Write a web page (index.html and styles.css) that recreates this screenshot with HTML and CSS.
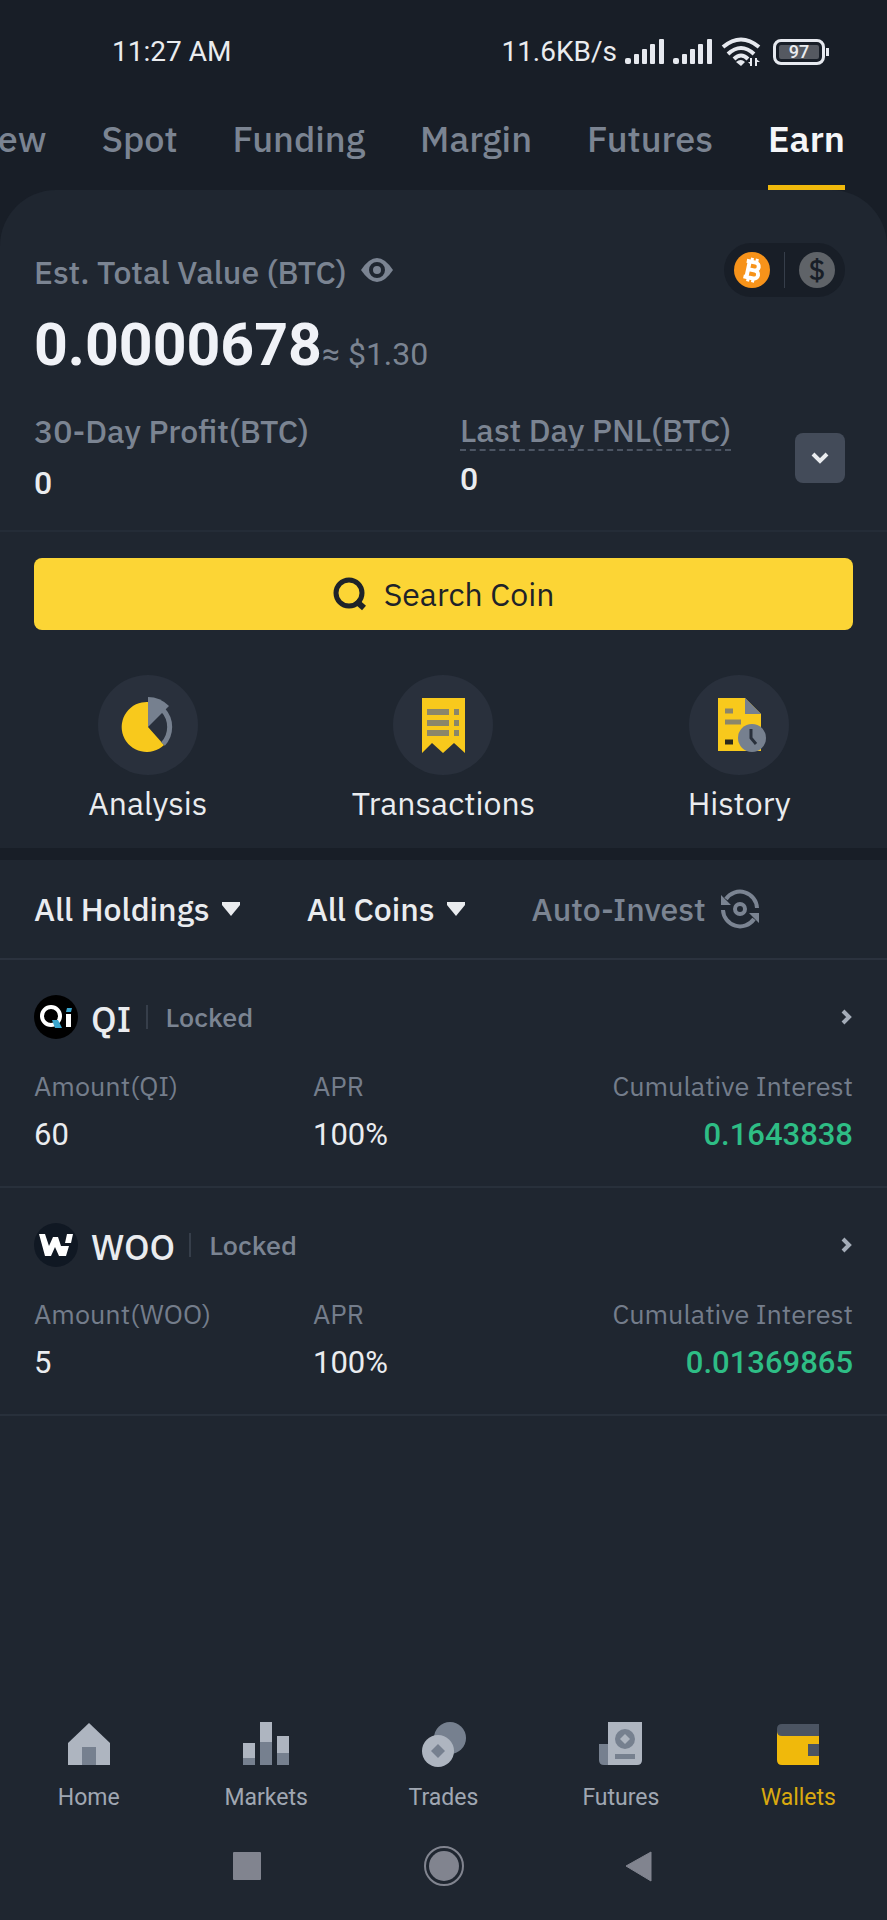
FILE: index.html
```html
<!DOCTYPE html>
<html lang="en">
<head>
  <meta charset="UTF-8">
  <meta name="viewport" content="width=device-width, initial-scale=1">
  <title>Wallets - Earn</title>
  <link rel="stylesheet" href="styles.css">
</head>
<body>
  <header class="status-bar">
    <span class="time">11:27 AM</span>
    <div class="status-right">
      <span>11.6KB/s</span>
      <svg class="signal" width="40" height="26" viewBox="0 0 40 26" fill="#e6e9ef"><rect x="0" y="19" width="6" height="6" rx="2"/><rect x="9" y="15" width="5" height="10" rx="1"/><rect x="17" y="10" width="5" height="15" rx="1"/><rect x="25" y="5" width="5" height="20" rx="1"/><rect x="34" y="0" width="5" height="25" rx="1"/></svg>
      <svg class="signal" width="40" height="26" viewBox="0 0 40 26" fill="#e6e9ef"><rect x="0" y="19" width="6" height="6" rx="2"/><rect x="9" y="15" width="5" height="10" rx="1"/><rect x="17" y="10" width="5" height="15" rx="1"/><rect x="25" y="5" width="5" height="20" rx="1"/><rect x="34" y="0" width="5" height="25" rx="1"/></svg>
      <svg class="wifi" width="40" height="30" viewBox="0 0 40 30" fill="none" stroke="#e6e9ef" stroke-width="4"><path d="M2 10Q20-5 38 10M7 17Q20 5 33 17M13 22Q20 15 27 22"/><path d="M15 25Q20 21 24 25L20 29Z" fill="#e6e9ef" stroke="none"/><path d="M30 21v8M35 21v8" stroke-width="2"/><path d="M27 25h4v4zM34 21l5 4h-5z" fill="#e6e9ef" stroke="none"/></svg>
      <span class="battery">97</span>
    </div>
  </header>

  <nav class="tabs">
    <a href="#" class="tab">Overview</a>
    <a href="#" class="tab">Spot</a>
    <a href="#" class="tab">Funding</a>
    <a href="#" class="tab">Margin</a>
    <a href="#" class="tab">Futures</a>
    <a href="#" class="tab active">Earn</a>
  </nav>

  <main>
    <section class="summary">
      <div class="summary-head">
        <span class="label">Est. Total Value (BTC)</span>
        <svg class="eye" width="32" height="24" viewBox="0 0 32 24"><path d="M0 12Q16-12 32 12Q16 36 0 12Z" fill="#7b8492"/><circle cx="16" cy="12" r="6" fill="none" stroke="#1f2630" stroke-width="4"/></svg>
        <div class="currency">
          <button class="coin btc" aria-label="Show in BTC"><svg width="36" height="36" viewBox="0 0 36 36"><g transform="rotate(12 18 18)" fill="none" stroke="#fff" stroke-width="4"><path d="M11 10h9a4 4 0 0 1 0 8h-6h7a4 4 0 0 1 0 8H11M14 10v16"/><path d="M16 6v5M21 6v5M16 25v5M21 25v5" stroke-width="3"/></g></svg></button>
          <span class="currency-line"></span>
          <button class="coin usd" aria-label="Show in USD">$</button>
        </div>
      </div>
      <div class="balance"><strong>0.0000678</strong><span>≈ $1.30</span></div>
      <div class="stats">
        <div class="stat">
          <span class="label">30-Day Profit(BTC)</span>
          <b>0</b>
        </div>
        <div class="stat">
          <span class="label dashed">Last Day PNL(BTC)</span>
          <b>0</b>
        </div>
        <button class="expand" aria-label="Expand"><svg width="18" height="12" viewBox="0 0 18 12" fill="none" stroke="#eaecef" stroke-width="4"><path d="M2 2l7 7 7-7"/></svg></button>
      </div>
    </section>

    <section class="tools">
      <button class="search"><svg width="34" height="34" viewBox="0 0 34 34" fill="none" stroke="#1e2329"><circle cx="16" cy="16" r="13" stroke-width="5"/><path d="M23 24l8 7" stroke-width="6"/></svg>Search Coin</button>
      <div class="actions">
        <a href="#" class="action">
          <span class="action-icon"><svg width="54" height="58" viewBox="0 0 54 58"><path d="M27 6v25l16 18A25 25 0 1 1 27 6Z" fill="#f8c91c"/><path d="M27 1q12 0 21 9l-3 3L27 31Z" fill="#76808f"/><path d="M42 14a25 25 0 0 1 0 34" fill="none" stroke="#76808f" stroke-width="5"/></svg></span>
          Analysis
        </a>
        <a href="#" class="action">
          <span class="action-icon"><svg width="54" height="58" viewBox="0 0 54 58"><path d="M6 2h43v55l-11-10-11 10-11-10L6 57Z" fill="#f8c91c"/><path d="M11 16h22M38 16h5M11 27h22M38 27h5M11 37h22M38 37h5" stroke="#8b866a" stroke-width="6"/></svg></span>
          Transactions
        </a>
        <a href="#" class="action">
          <span class="action-icon"><svg width="54" height="58" viewBox="0 0 54 58"><path d="M6 2h27l16 16v37H6Z" fill="#f8c91c"/><path d="M33 2l16 16H33Z" fill="#76808f"/><path d="M13 15h8M13 26h16" stroke="#8b866a" stroke-width="5"/><path d="M13 46h8" stroke="#2b2a1c" stroke-width="5"/><circle cx="40" cy="42" r="14" fill="#76808f"/><path d="M39 33v9l5 6" fill="none" stroke="#29303c" stroke-width="3"/></svg></span>
          History
        </a>
      </div>
    </section>

    <section class="filters">
      <button class="filter">All Holdings <svg width="18" height="14" viewBox="0 0 18 14"><path d="M0 0h18v3L9 14 0 3Z" fill="#eaecef"/></svg></button>
      <button class="filter">All Coins <svg width="18" height="14" viewBox="0 0 18 14"><path d="M0 0h18v3L9 14 0 3Z" fill="#eaecef"/></svg></button>
      <button class="filter muted">Auto-Invest <svg width="40" height="40" viewBox="0 0 40 40" fill="none" stroke="#7b8492" stroke-width="4"><path d="M6 10A17 17 0 0 1 37 19M34 30A17 17 0 0 1 3 21"/><circle cx="20" cy="20" r="5"/><path d="M1 6v10h10ZM39 34V24H29Z" fill="#7b8492" stroke="none"/></svg></button>
    </section>

    <section class="holding">
      <a href="#" class="holding-head">
        <svg class="logo" width="44" height="44" viewBox="0 0 44 44"><circle cx="22" cy="22" r="22" fill="#000"/><circle cx="17" cy="21" r="9" fill="none" stroke="#fff" stroke-width="4"/><path d="M18 25h6l4 8h-7Z" fill="#3aa5cd"/><path d="M32 19h5v13h-5Z" fill="#fff"/><path d="M33 13h5l-1 4h-5Z" fill="#3aa5cd"/></svg>
        <span class="name">QI</span>
        <span class="type">Locked</span>
        <svg class="arrow" width="12" height="16" viewBox="0 0 12 16" fill="none" stroke="#a4acb8" stroke-width="4"><path d="M2 2l6 6-6 6"/></svg>
      </a>
      <dl class="figures">
        <div><dt>Amount(QI)</dt><dd>60</dd></div>
        <div><dt>APR</dt><dd>100%</dd></div>
        <div><dt>Cumulative Interest</dt><dd class="green">0.1643838</dd></div>
      </dl>
    </section>

    <section class="holding">
      <a href="#" class="holding-head">
        <svg class="logo" width="44" height="44" viewBox="0 0 44 44"><circle cx="22" cy="22" r="22" fill="#101823"/><path d="M5 11h6l4 12 4-9h5l3 9h8l-3 10h-7l-4-9-4 9h-6Z" fill="#fff"/><path d="M33 11h6l-2 9h-6Z" fill="#fff"/></svg>
        <span class="name">WOO</span>
        <span class="type">Locked</span>
        <svg class="arrow" width="12" height="16" viewBox="0 0 12 16" fill="none" stroke="#a4acb8" stroke-width="4"><path d="M2 2l6 6-6 6"/></svg>
      </a>
      <dl class="figures">
        <div><dt>Amount(WOO)</dt><dd>5</dd></div>
        <div><dt>APR</dt><dd>100%</dd></div>
        <div><dt>Cumulative Interest</dt><dd class="green">0.01369865</dd></div>
      </dl>
    </section>
  </main>

  <footer>
    <nav class="bottom-nav">
      <a href="#"><svg width="48" height="48" viewBox="0 0 48 48"><path d="M24 3l21 20v22H3V23Z" fill="#aeb5c0"/><path d="M17 27h14v18H17Z" fill="#76808f"/></svg>Home</a>
      <a href="#"><svg width="48" height="48" viewBox="0 0 48 48"><path d="M1 23h12v16H1ZM18 2h12v21H18ZM35 16h12v18H35Z" fill="#aeb5c0"/><path d="M1 38h12v7H1ZM18 22h12v23H18ZM35 33h12v12H35Z" fill="#76808f"/></svg>Markets</a>
      <a href="#"><svg width="48" height="48" viewBox="0 0 48 48"><circle cx="31" cy="18" r="16" fill="#76808f"/><circle cx="19" cy="31" r="16" fill="#aeb5c0"/><path d="M19 24l7 7-7 7-7-7Z" fill="#76808f"/></svg>Trades</a>
      <a href="#"><svg width="48" height="48" viewBox="0 0 48 48"><path d="M2 24h9v21H7q-5 0-5-5Z" fill="#76808f"/><path d="M11 2h34v38q0 5-5 5H11Z" fill="#aeb5c0"/><circle cx="28" cy="19" r="10" fill="#76808f"/><path d="M28 14l5 5-5 5-5-5Z" fill="#aeb5c0"/><path d="M18 34h20v5H18Z" fill="#76808f"/></svg>Futures</a>
      <a href="#" class="current"><svg width="48" height="48" viewBox="0 0 48 48"><path d="M3 10l6 5h36v30H8q-5 0-5-5Z" fill="#f0b90b"/><path d="M8 4h37v12H8q-5 0-5-5v-2q0-5 5-5ZM34 24h11v12H34Z" fill="#4b5462"/></svg>Wallets</a>
    </nav>
    <div class="system-nav">
      <button aria-label="Recent apps"><svg width="40" height="40" viewBox="0 0 40 40"><rect x="6" y="6" width="28" height="28" rx="1" fill="#81848f"/></svg></button>
      <button aria-label="Home screen"><svg width="40" height="40" viewBox="0 0 40 40"><circle cx="20" cy="20" r="19" fill="none" stroke="#81848f" stroke-width="2"/><circle cx="20" cy="20" r="15" fill="#81848f"/></svg></button>
      <button aria-label="Back"><svg width="40" height="40" viewBox="0 0 40 40"><path d="M30 6v29L5 20Z" fill="#81848f" stroke="#81848f" stroke-linejoin="round"/></svg></button>
    </div>
  </footer>
</body>
</html>
```

FILE: styles.css
```css
* {
  box-sizing: border-box;
}
body {
  margin: 0;
  min-height: 100vh;
  display: flex;
  flex-direction: column;
  background: #181e27;
  color: #eaecef;
  font-family: 'IBM Plex Sans', Roboto, sans-serif;
  font-size: 32px;
  line-height: 40px;
  overflow-x: hidden;
}
a {
  color: inherit;
  text-decoration: none;
}
button {
  border: none;
  padding: 0;
  background: none;
  color: inherit;
  font: inherit;
  cursor: pointer;
}
svg {
  display: block;
  flex-shrink: 0;
}

/* phone status bar */
.status-bar {
  display: flex;
  justify-content: space-between;
  align-items: center;
  height: 104px;
  padding: 0 58px 0 112px;
  font-family: Roboto, sans-serif;
  font-size: 28px;
}
.status-right {
  display: flex;
  align-items: center;
  gap: 8px;
}
.battery {
  position: relative;
  width: 52px;
  height: 26px;
  margin: 0 4px;
  border: 3px solid #e6e9ef;
  border-radius: 8px;
  background: #555961;
  box-shadow: inset 0 0 0 3px #181e27;
  font-size: 18px;
  font-weight: 500;
  line-height: 20px;
  text-align: center;
}
.battery::after {
  content: "";
  position: absolute;
  top: 6px;
  right: -7px;
  width: 3px;
  height: 8px;
  background: #e6e9ef;
}

/* wallet tabs */
.tabs {
  display: flex;
  justify-content: flex-end;
  gap: 55px;
  height: 86px;
  padding-right: 42px;
  font-size: 36px;
  font-weight: 500;
  color: #7b8492;
}
.tab {
  padding-top: 15px;
}
.tab.active {
  border-bottom: 5px solid #f0b90b;
  color: #f5f6f8;
  font-weight: 600;
}

main {
  flex: 1;
  background: #1f2630;
  border-radius: 56px 56px 0 0;
}
.label {
  color: #7b8492;
  font-weight: 500;
}
.summary {
  padding: 53px 34px 0;
  height: 342px;
  border-bottom: 2px solid #242c37;
}
.summary-head {
  display: flex;
  align-items: center;
  height: 54px;
}
.summary-head .label {
  padding-top: 4px;
}
.eye {
  margin-left: 14px;
}
.currency {
  display: flex;
  align-items: center;
  gap: 14px;
  height: 54px;
  margin-left: auto;
  margin-right: 8px;
  padding: 0 10px;
  border-radius: 27px;
  background: #181e27;
}
.currency-line {
  width: 1px;
  height: 36px;
  background: #363e4a;
}
.coin {
  width: 36px;
  height: 36px;
  border-radius: 50%;
}
.btc {
  background: #f7931a;
}
.usd {
  background: #5f6368;
  color: #181e27;
  font-size: 28px;
  font-weight: 500;
  line-height: 36px;
}
.balance {
  display: flex;
  align-items: baseline;
  height: 104px;
  padding-top: 16px;
  color: #7b8492;
  font-family: Roboto, sans-serif;
}
.balance strong {
  color: #f0f2f7;
  font-size: 59px;
  line-height: 64px;
}
.stats {
  display: flex;
  padding-top: 10px;
}
.stat {
  display: flex;
  flex-direction: column;
  align-items: flex-start;
  flex: 1;
  gap: 12px;
}
.stat:first-child {
  flex: 0 0 52%;
}
.stat b {
  font-family: Roboto, sans-serif;
  font-weight: 500;
}
.stat + .stat {
  gap: 8px;
}
.dashed {
  line-height: 38px;
  border-bottom: 2px dashed #4c5563;
}
.expand {
  display: grid;
  place-items: center;
  width: 50px;
  height: 50px;
  margin: 22px 8px 0 0;
  border-radius: 8px;
  background: #434b59;
}

.tools {
  padding: 26px 34px 0;
  height: 328px;
  border-bottom: 12px solid #181e27;
}
.search {
  display: flex;
  justify-content: center;
  align-items: center;
  gap: 17px;
  width: 100%;
  height: 72px;
  border-radius: 8px;
  background: #fcd535;
  color: #1e2329;
}
.actions {
  display: grid;
  grid-template-columns: repeat(3, 1fr);
  margin: 45px -34px 0;
}
.action {
  display: flex;
  flex-direction: column;
  align-items: center;
  gap: 8px;
}
.action-icon {
  display: grid;
  place-items: center;
  width: 100px;
  height: 100px;
  border-radius: 50%;
  background: #29303c;
}

.filters {
  display: flex;
  gap: 67px;
  height: 100px;
  padding: 0 34px;
  border-bottom: 2px solid #2b323e;
  font-weight: 500;
}
.filter {
  display: flex;
  align-items: center;
  gap: 12px;
}
.muted {
  gap: 14px;
  color: #7b8492;
}

.holding {
  height: 228px;
  padding: 34px 34px 0;
  border-bottom: 2px solid #28303b;
}
.holding-head {
  display: flex;
  align-items: center;
  height: 46px;
}
.name {
  margin-left: 13px;
  padding-top: 4px;
  font-size: 36px;
  font-weight: 500;
  line-height: 44px;
}
.type {
  margin-left: 14px;
  padding-left: 18px;
  border-left: 2px solid #363e4a;
  color: #7b8492;
  font-size: 27px;
  font-weight: 500;
  line-height: 24px;
}
.arrow {
  margin-left: auto;
}
.figures {
  display: grid;
  grid-template-columns: 279px 1fr auto;
  margin: 26px 0 0;
}
.figures dt {
  color: #747d8b;
  font-size: 27px;
  line-height: 40px;
}
.figures dd {
  margin: 9px 0 0;
  font-family: Roboto, sans-serif;
  font-size: 31px;
}
.figures div:last-child {
  text-align: right;
}
.figures .green {
  color: #2ebd85;
  font-weight: 500;
}

footer {
  background: #1f2630;
  font-family: Roboto, sans-serif;
}
.bottom-nav {
  display: grid;
  grid-template-columns: repeat(5, 1fr);
  height: 104px;
  color: #a0a7b2;
  font-size: 23px;
  line-height: 32px;
}
.bottom-nav a {
  display: flex;
  flex-direction: column;
  align-items: center;
  gap: 14px;
}
.bottom-nav .current {
  color: #d9a90f;
}
.system-nav {
  display: flex;
  justify-content: center;
  align-items: flex-start;
  gap: 157px;
  height: 96px;
  padding-top: 22px;
}
```
